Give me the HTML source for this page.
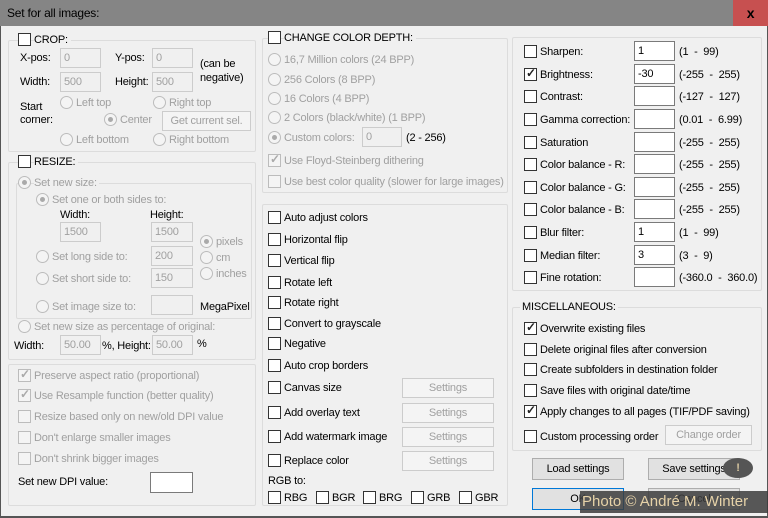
<!DOCTYPE html><html><head><style>
*{box-sizing:border-box}
body{margin:0;width:768px;height:518px;overflow:hidden;background:#f0f0f0;font-family:"Liberation Sans",sans-serif;font-size:11px;letter-spacing:-0.2px;color:#000;position:relative}
.a{position:absolute;white-space:nowrap;line-height:14px}
.d{color:#a0a0a0}
.g{position:absolute;border:1px solid #dcdcdc;border-radius:2px}
.cb{position:absolute;width:13px;height:13px;border:1px solid #333;background:#fff}
.cb.d{border-color:#bcbcbc;background:#f4f4f4}
.rb{position:absolute;width:13px;height:13px;border:1px solid #bcbcbc;border-radius:50%;background:#f4f4f4}
.rb.on::after{content:"";position:absolute;left:3px;top:3px;width:5px;height:5px;border-radius:50%;background:#aaa}
.in{position:absolute;height:20px;border:1px solid #7a7a7a;background:#fff;padding:2px 3px;line-height:14px}
.in.d{border-color:#ccc;background:#f0f0f0;color:#a0a0a0}
.bt{position:absolute;border:1px solid #adadad;background:#e1e1e1;text-align:center;line-height:18px}
.bt.d{border-color:#ccc;background:#f4f4f4;color:#a0a0a0}
.ck::after{content:"✓";position:absolute;left:1px;top:-3px;font-size:12px;font-weight:bold;color:#222}
.ck.d::after{color:#aaa}
</style></head><body>
<div style="position:absolute;left:0;top:0;width:768px;height:26px;background:#858585"></div>
<div class="a" style="left:7px;top:6px;font-size:12px">Set for all images:</div>
<div style="position:absolute;left:733px;top:0;width:35px;height:26px;background:#c75050;color:#000;font-weight:bold;text-align:center;line-height:26px;font-size:14px">x</div>
<div style="position:absolute;left:0;top:26px;width:1px;height:492px;background:#555"></div>
<div style="position:absolute;left:767px;top:26px;width:1px;height:492px;background:#555"></div>
<div style="position:absolute;left:0;top:516px;width:768px;height:2px;background:#555"></div>

<!-- CROP -->
<div class="g" style="left:8px;top:40px;width:248px;height:112px"></div>
<div class="cb" style="left:18px;top:33px;"></div><div class="a" style="left:34px;top:33px;background:#f0f0f0;padding-right:3px">CROP:</div>
<div class="a" style="left:20px;top:51px">X-pos:</div><div class="in d" style="left:60px;top:48px;width:41px">0</div>
<div class="a" style="left:115px;top:51px">Y-pos:</div><div class="in d" style="left:152px;top:48px;width:41px">0</div>
<div class="a" style="left:200px;top:57px">(can be</div><div class="a" style="left:200px;top:71px">negative)</div>
<div class="a" style="left:20px;top:75px">Width:</div><div class="in d" style="left:60px;top:72px;width:41px">500</div>
<div class="a" style="left:115px;top:75px">Height:</div><div class="in d" style="left:152px;top:72px;width:41px">500</div>
<div class="a" style="left:20px;top:100px">Start</div><div class="a" style="left:20px;top:113px">corner:</div>
<div class="rb" style="left:60px;top:96px"></div><div class="a d" style="left:76px;top:96px">Left top</div>
<div class="rb" style="left:153px;top:96px"></div><div class="a d" style="left:169px;top:96px">Right top</div>
<div class="rb on" style="left:104px;top:113px"></div><div class="a d" style="left:120px;top:113px">Center</div>
<div class="bt d" style="left:162px;top:111px;width:89px;height:20px">Get current sel.</div>
<div class="rb" style="left:60px;top:133px"></div><div class="a d" style="left:76px;top:133px">Left bottom</div>
<div class="rb" style="left:153px;top:133px"></div><div class="a d" style="left:169px;top:133px">Right bottom</div>

<!-- RESIZE -->
<div class="g" style="left:8px;top:162px;width:248px;height:198px"></div>
<div class="cb" style="left:18px;top:155px"></div><div class="a" style="left:34px;top:155px;background:#f0f0f0;padding-right:3px">RESIZE:</div>
<div class="g" style="left:16px;top:183px;width:236px;height:136px"></div>
<div class="rb on" style="left:18px;top:176px"></div><div class="a d" style="left:34px;top:176px;background:#f0f0f0;padding-right:2px">Set new size:</div>
<div class="rb on" style="left:36px;top:193px"></div><div class="a d" style="left:52px;top:193px">Set one or both sides to:</div>
<div class="a" style="left:60px;top:208px">Width:</div><div class="a" style="left:150px;top:208px">Height:</div>
<div class="in d" style="left:60px;top:222px;width:41px">1500</div><div class="in d" style="left:151px;top:222px;width:42px">1500</div>
<div class="rb on" style="left:200px;top:235px"></div><div class="a d" style="left:216px;top:235px">pixels</div>
<div class="rb" style="left:200px;top:251px"></div><div class="a d" style="left:216px;top:251px">cm</div>
<div class="rb" style="left:200px;top:267px"></div><div class="a d" style="left:216px;top:267px">inches</div>
<div class="rb" style="left:36px;top:250px"></div><div class="a d" style="left:52px;top:250px">Set long side to:</div><div class="in d" style="left:151px;top:246px;width:42px">200</div>
<div class="rb" style="left:36px;top:272px"></div><div class="a d" style="left:52px;top:272px">Set short side to:</div><div class="in d" style="left:151px;top:268px;width:42px">150</div>
<div class="rb" style="left:36px;top:300px"></div><div class="a d" style="left:52px;top:300px">Set image size to:</div><div class="in d" style="left:151px;top:295px;width:42px"></div>
<div class="a" style="left:200px;top:300px">MegaPixel</div>
<div class="rb" style="left:18px;top:320px"></div><div class="a d" style="left:34px;top:320px">Set new size as percentage of original:</div>
<div class="a" style="left:14px;top:339px">Width:</div><div class="in d" style="left:60px;top:335px;width:41px">50.00</div>
<div class="a" style="left:102px;top:339px">%, Height:</div><div class="in d" style="left:152px;top:335px;width:41px">50.00</div><div class="a" style="left:197px;top:337px">%</div>

<div class="g" style="left:8px;top:364px;width:248px;height:142px"></div>
<div class="cb d ck" style="left:18px;top:369px"></div><div class="a d" style="left:34px;top:369px">Preserve aspect ratio (proportional)</div>
<div class="cb d ck" style="left:18px;top:389px"></div><div class="a d" style="left:34px;top:389px">Use Resample function (better quality)</div>
<div class="cb d" style="left:18px;top:410px"></div><div class="a d" style="left:34px;top:410px">Resize based only on new/old DPI value</div>
<div class="cb d" style="left:18px;top:431px"></div><div class="a d" style="left:34px;top:431px">Don't enlarge smaller images</div>
<div class="cb d" style="left:18px;top:452px"></div><div class="a d" style="left:34px;top:452px">Don't shrink bigger images</div>
<div class="a" style="left:18px;top:475px">Set new DPI value:</div><div class="in" style="left:150px;top:472px;width:43px;height:21px"></div>

<!-- COLOR DEPTH -->
<div class="g" style="left:262px;top:38px;width:246px;height:155px"></div>
<div class="cb" style="left:268px;top:31px"></div><div class="a" style="left:284px;top:31px;background:#f0f0f0;padding-right:3px">CHANGE COLOR DEPTH:</div>
<div class="rb" style="left:268px;top:53px"></div><div class="a d" style="left:284px;top:53px">16,7 Million colors (24 BPP)</div>
<div class="rb" style="left:268px;top:73px"></div><div class="a d" style="left:284px;top:73px">256 Colors (8 BPP)</div>
<div class="rb" style="left:268px;top:92px"></div><div class="a d" style="left:284px;top:92px">16 Colors (4 BPP)</div>
<div class="rb" style="left:268px;top:111px"></div><div class="a d" style="left:284px;top:111px">2 Colors (black/white) (1 BPP)</div>
<div class="rb on" style="left:268px;top:131px"></div><div class="a d" style="left:284px;top:131px">Custom colors:</div>
<div class="in d" style="left:362px;top:127px;width:40px">0</div><div class="a" style="left:406px;top:131px">(2 - 256)</div>
<div class="cb d ck" style="left:268px;top:154px"></div><div class="a d" style="left:284px;top:154px">Use Floyd-Steinberg dithering</div>
<div class="cb d" style="left:268px;top:175px"></div><div class="a d" style="left:284px;top:175px">Use best color quality (slower for large images)</div>

<div class="g" style="left:262px;top:204px;width:246px;height:302px"></div>
<div class="cb" style="left:268px;top:211px"></div><div class="a" style="left:284px;top:211px">Auto adjust colors</div>
<div class="cb" style="left:268px;top:233px"></div><div class="a" style="left:284px;top:233px">Horizontal flip</div>
<div class="cb" style="left:268px;top:254px"></div><div class="a" style="left:284px;top:254px">Vertical flip</div>
<div class="cb" style="left:268px;top:276px"></div><div class="a" style="left:284px;top:276px">Rotate left</div>
<div class="cb" style="left:268px;top:296px"></div><div class="a" style="left:284px;top:296px">Rotate right</div>
<div class="cb" style="left:268px;top:317px"></div><div class="a" style="left:284px;top:317px">Convert to grayscale</div>
<div class="cb" style="left:268px;top:337px"></div><div class="a" style="left:284px;top:337px">Negative</div>
<div class="cb" style="left:268px;top:359px"></div><div class="a" style="left:284px;top:359px">Auto crop borders</div>
<div class="cb" style="left:268px;top:381px"></div><div class="a" style="left:284px;top:381px">Canvas size</div><div class="bt d" style="left:402px;top:378px;width:92px;height:20px">Settings</div>
<div class="cb" style="left:268px;top:406px"></div><div class="a" style="left:284px;top:406px">Add overlay text</div><div class="bt d" style="left:402px;top:403px;width:92px;height:20px">Settings</div>
<div class="cb" style="left:268px;top:430px"></div><div class="a" style="left:284px;top:430px">Add watermark image</div><div class="bt d" style="left:402px;top:427px;width:92px;height:20px">Settings</div>
<div class="cb" style="left:268px;top:454px"></div><div class="a" style="left:284px;top:454px">Replace color</div><div class="bt d" style="left:402px;top:451px;width:92px;height:20px">Settings</div>
<div class="a" style="left:268px;top:474px">RGB to:</div>
<div class="cb" style="left:268px;top:491px"></div><div class="a" style="left:284px;top:491px">RBG</div>
<div class="cb" style="left:316px;top:491px"></div><div class="a" style="left:332px;top:491px">BGR</div>
<div class="cb" style="left:363px;top:491px"></div><div class="a" style="left:379px;top:491px">BRG</div>
<div class="cb" style="left:411px;top:491px"></div><div class="a" style="left:427px;top:491px">GRB</div>
<div class="cb" style="left:459px;top:491px"></div><div class="a" style="left:475px;top:491px">GBR</div>

<!-- RIGHT -->
<div class="g" style="left:512px;top:37px;width:250px;height:254px"></div>
<div class="cb" style="left:524px;top:45px"></div><div class="a" style="left:540px;top:45px">Sharpen:</div><div class="in" style="left:634px;top:41px;width:41px">1</div><div class="a" style="left:679px;top:45px">(1 &nbsp;- &nbsp;99)</div>
<div class="cb ck" style="left:524px;top:68px"></div><div class="a" style="left:540px;top:68px">Brightness:</div><div class="in" style="left:634px;top:64px;width:41px">-30</div><div class="a" style="left:679px;top:68px">(-255 &nbsp;- &nbsp;255)</div>
<div class="cb" style="left:524px;top:90px"></div><div class="a" style="left:540px;top:90px">Contrast:</div><div class="in" style="left:634px;top:86px;width:41px"></div><div class="a" style="left:679px;top:90px">(-127 &nbsp;- &nbsp;127)</div>
<div class="cb" style="left:524px;top:113px"></div><div class="a" style="left:540px;top:113px">Gamma correction:</div><div class="in" style="left:634px;top:109px;width:41px"></div><div class="a" style="left:679px;top:113px">(0.01 &nbsp;- &nbsp;6.99)</div>
<div class="cb" style="left:524px;top:136px"></div><div class="a" style="left:540px;top:136px">Saturation</div><div class="in" style="left:634px;top:132px;width:41px"></div><div class="a" style="left:679px;top:136px">(-255 &nbsp;- &nbsp;255)</div>
<div class="cb" style="left:524px;top:158px"></div><div class="a" style="left:540px;top:158px">Color balance - R:</div><div class="in" style="left:634px;top:154px;width:41px"></div><div class="a" style="left:679px;top:158px">(-255 &nbsp;- &nbsp;255)</div>
<div class="cb" style="left:524px;top:181px"></div><div class="a" style="left:540px;top:181px">Color balance - G:</div><div class="in" style="left:634px;top:177px;width:41px"></div><div class="a" style="left:679px;top:181px">(-255 &nbsp;- &nbsp;255)</div>
<div class="cb" style="left:524px;top:203px"></div><div class="a" style="left:540px;top:203px">Color balance - B:</div><div class="in" style="left:634px;top:199px;width:41px"></div><div class="a" style="left:679px;top:203px">(-255 &nbsp;- &nbsp;255)</div>
<div class="cb" style="left:524px;top:226px"></div><div class="a" style="left:540px;top:226px">Blur filter:</div><div class="in" style="left:634px;top:222px;width:41px">1</div><div class="a" style="left:679px;top:226px">(1 &nbsp;- &nbsp;99)</div>
<div class="cb" style="left:524px;top:249px"></div><div class="a" style="left:540px;top:249px">Median filter:</div><div class="in" style="left:634px;top:245px;width:41px">3</div><div class="a" style="left:679px;top:249px">(3 &nbsp;- &nbsp;9)</div>
<div class="cb" style="left:524px;top:271px"></div><div class="a" style="left:540px;top:271px">Fine rotation:</div><div class="in" style="left:634px;top:267px;width:41px"></div><div class="a" style="left:679px;top:271px">(-360.0 &nbsp;- &nbsp;360.0)</div>

<div class="g" style="left:512px;top:307px;width:250px;height:144px"></div>
<div class="a" style="left:520px;top:300px;background:#f0f0f0;padding:0 2px">MISCELLANEOUS:</div>
<div class="cb ck" style="left:524px;top:322px"></div><div class="a" style="left:540px;top:322px">Overwrite existing files</div>
<div class="cb" style="left:524px;top:343px"></div><div class="a" style="left:540px;top:343px">Delete original files after conversion</div>
<div class="cb" style="left:524px;top:363px"></div><div class="a" style="left:540px;top:363px">Create subfolders in destination folder</div>
<div class="cb" style="left:524px;top:384px"></div><div class="a" style="left:540px;top:384px">Save files with original date/time</div>
<div class="cb ck" style="left:524px;top:405px"></div><div class="a" style="left:540px;top:405px">Apply changes to all pages (TIF/PDF saving)</div>
<div class="cb" style="left:524px;top:430px"></div><div class="a" style="left:540px;top:430px">Custom processing order</div>
<div class="bt d" style="left:665px;top:425px;width:87px;height:20px">Change order</div>

<div class="bt" style="left:532px;top:458px;width:92px;height:22px;line-height:20px">Load settings</div>
<div class="bt" style="left:648px;top:458px;width:92px;height:22px;line-height:20px">Save settings</div>
<div class="bt" style="left:532px;top:488px;width:92px;height:22px;border-color:#0078d7;line-height:20px">OK</div>
<div class="bt" style="left:648px;top:488px;width:92px;height:22px;line-height:20px">Cancel</div>
<div style="position:absolute;left:723px;top:458px;width:30px;height:20px;border-radius:50%;background:#555;color:#d8c7a0;font-weight:bold;text-align:center;line-height:20px">!</div>
<div style="position:absolute;left:580px;top:491px;width:188px;height:22px;background:rgba(60,60,60,.85);color:#e6d2a8;font-size:15px;letter-spacing:0;line-height:22px;padding-left:2px;white-space:nowrap">Photo © André M. Winter</div>
</body></html>
